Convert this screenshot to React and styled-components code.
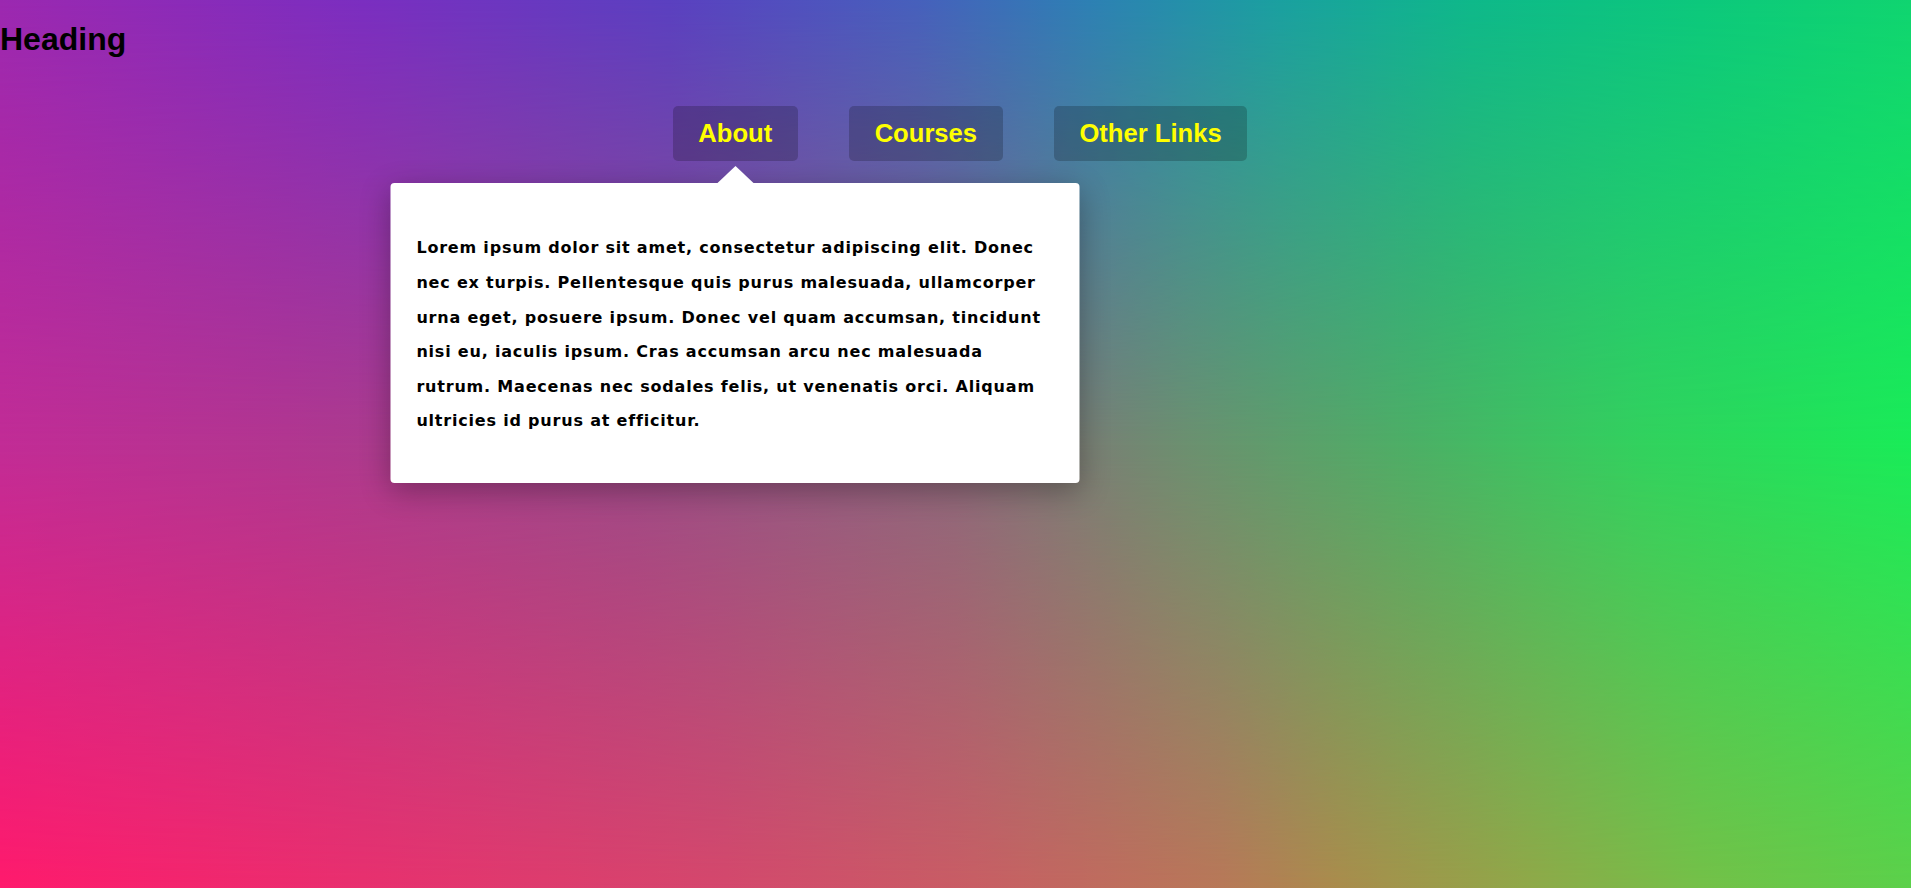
import React from 'react';
import styled, { createGlobalStyle } from 'styled-components';

const GlobalStyle = createGlobalStyle`
    body {
        margin: 0;
        font-family: "Liberation Sans", Arial, sans-serif;
    }
`;

const Page = styled.div`
    position: relative;
    isolation: isolate;
    min-height: 100vh;
    overflow: hidden;
    background: linear-gradient(
        to right,
        #c22c96 0%,
        #b23690 15%,
        #9c4a88 33%,
        #8a6a7c 50%,
        #6c9070 62%,
        #4cb066 74%,
        #32d25e 86%,
        #1aec58 100%
    );

    &::before,
    &::after {
        content: '';
        position: absolute;
        inset: 0;
        z-index: -1;
    }

    &::before {
        background: linear-gradient(
            to right,
            #9b28b0 0%,
            #7a2ec0 19%,
            #5a40c0 35%,
            #4660bc 48%,
            #2d80b4 57%,
            #1aa0a0 67%,
            #0eb88a 77%,
            #0cc87c 89%,
            #10d470 100%
        );
        mask-image: linear-gradient(to bottom, #000 0%, transparent 50%);
    }

    &::after {
        background: linear-gradient(
            to right,
            #ff1a6c 0%,
            #e8306e 19%,
            #d4486c 38%,
            #c85e64 51%,
            #b87858 64%,
            #aa8c4c 70%,
            #90a848 80%,
            #74c048 89%,
            #5cd04a 100%
        );
        mask-image: linear-gradient(to bottom, transparent 50%, #000 100%);
    }
`;

const Heading = styled.h1`
    margin: 21.44px 0;
    font-size: 32px;
    font-weight: bold;
    color: #000;
`;

const Nav = styled.ul`
    display: flex;
    justify-content: center;
    gap: 51.2px;
    list-style: none;
    margin: 47.8px 0 0;
    padding: 0 0 0 9px;
`;

const NavItem = styled.li`
    position: relative;
`;

const NavLink = styled.a`
    display: block;
    padding: 12.8px 25.6px;
    border-radius: 5px;
    background: rgba(0, 0, 0, 0.2);
    color: #ffff00;
    font-size: 25.6px;
    font-weight: bold;
    text-decoration: none;
    cursor: pointer;
`;

const Dropdown = styled.div`
    position: absolute;
    top: calc(100% + 22px);
    left: 50%;
    transform: translateX(-50%);
    width: 689px;
    box-sizing: border-box;
    padding: 28px 25.6px 23.2px;
    background: #fff;
    border-radius: 4px;
    box-shadow: 0 8px 30px rgba(0, 0, 0, 0.3);

    &::before {
        content: '';
        position: absolute;
        left: 50%;
        bottom: 100%;
        transform: translateX(-50%);
        border-left: 18px solid transparent;
        border-right: 18px solid transparent;
        border-bottom: 17px solid #fff;
    }

    p {
        margin: 20.6px 0;
        font-family: "DejaVu Sans", Verdana, sans-serif;
        font-size: 16px;
        font-weight: bold;
        letter-spacing: 0.8px;
        line-height: 34.6px;
        color: #000;
    }
`;

const links = ['About', 'Courses', 'Other Links'];

const App = () => {
    return (
        <Page>
            <GlobalStyle />
            <Heading>Heading</Heading>
            <Nav>
                {links.map(link => (
                    <NavItem key={link}>
                        <NavLink>{link}</NavLink>
                        {link === 'About' && (
                            <Dropdown>
                                <p>
                                    Lorem ipsum dolor sit amet, consectetur adipiscing elit. Donec nec ex turpis.
                                    Pellentesque quis purus malesuada, ullamcorper urna eget, posuere ipsum. Donec vel
                                    quam accumsan, tincidunt nisi eu, iaculis ipsum. Cras accumsan arcu nec malesuada
                                    rutrum. Maecenas nec sodales felis, ut venenatis orci. Aliquam ultricies id purus at
                                    efficitur.
                                </p>
                            </Dropdown>
                        )}
                    </NavItem>
                ))}
            </Nav>
        </Page>
    );
};

export default App;
